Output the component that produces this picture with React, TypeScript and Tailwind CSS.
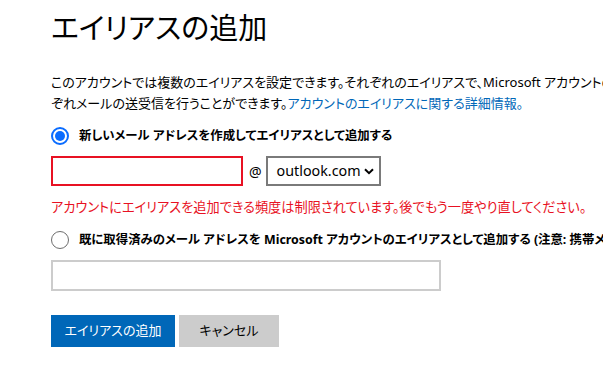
const Chevron = () => (
  <svg width="10" height="7" viewBox="0 0 10 7" fill="none">
    <path d="M1 1.2L5 5.2L9 1.2" stroke="#000" strokeWidth="2" />
  </svg>
);

const App = () => {
  return (
    <div className="min-h-screen overflow-hidden whitespace-nowrap bg-white pl-[51px] text-[#1b1b1b] [font-family:'Noto_Sans','Noto_Sans_CJK_JP',sans-serif] [font-feature-settings:'palt']">
      <h1 className="mt-[6px] text-[29px] leading-[44px] text-black">エイリアスの追加</h1>

      <p className="mt-[22px] text-[13px] leading-[21px] text-black">
        このアカウントでは複数のエイリアスを設定できます。それぞれのエイリアスで、Microsoft アカウントのすべての機能を使用でき、それ
        <br />
        ぞれメールの送受信を行うことができます。<a className="text-[#0067b8]">アカウントのエイリアスに関する詳細情報。</a>
      </p>

      <label className="mt-[12px] flex items-center gap-[10px]">
        <span className="flex h-[18px] w-[18px] shrink-0 items-center justify-center rounded-full border-2 border-[#0a6cff]">
          <span className="h-[10px] w-[10px] rounded-full bg-[#0a6cff]" />
        </span>
        <span className="text-[12.4px] font-bold leading-[20px] text-black">新しいメール アドレスを作成してエイリアスとして追加する</span>
      </label>

      <div className="mt-[10px] flex items-center">
        <div className="h-[30px] w-[192px] border-2 border-[#e81123]" />
        <span className="ml-[6px] text-[14px] text-black">@</span>
        <div className="ml-[4px] flex h-[30px] w-[115px] items-center justify-between border-2 border-[#7a7a7a] pl-[9px] pr-[5px]">
          <span className="text-[14.3px] text-black">outlook.com</span>
          <Chevron />
        </div>
      </div>

      <p className="mt-[11px] text-[13.2px] leading-[20px] text-[#e81123]">
        アカウントにエイリアスを追加できる頻度は制限されています。後でもう一度やり直してください。
      </p>

      <label className="mt-[13px] flex items-center gap-[10px]">
        <span className="block h-[18px] w-[18px] shrink-0 rounded-full border border-[#6e6e6e]" />
        <span className="text-[12.4px] font-bold leading-[20px] text-black">
          既に取得済みのメール アドレスを Microsoft アカウントのエイリアスとして追加する (注意: 携帯メールのアドレスは使用できません)
        </span>
      </label>

      <div className="mt-[10px] h-[31px] w-[390px] border-2 border-[#cccccc]" />

      <div className="mt-[24px] flex gap-[4px]">
        <button className="h-[32px] w-[124px] bg-[#0067b8] text-[13px] text-white">エイリアスの追加</button>
        <button className="h-[32px] w-[100px] bg-[#cccccc] text-[13px] text-black">キャンセル</button>
      </div>
    </div>
  );
};

export default App;
